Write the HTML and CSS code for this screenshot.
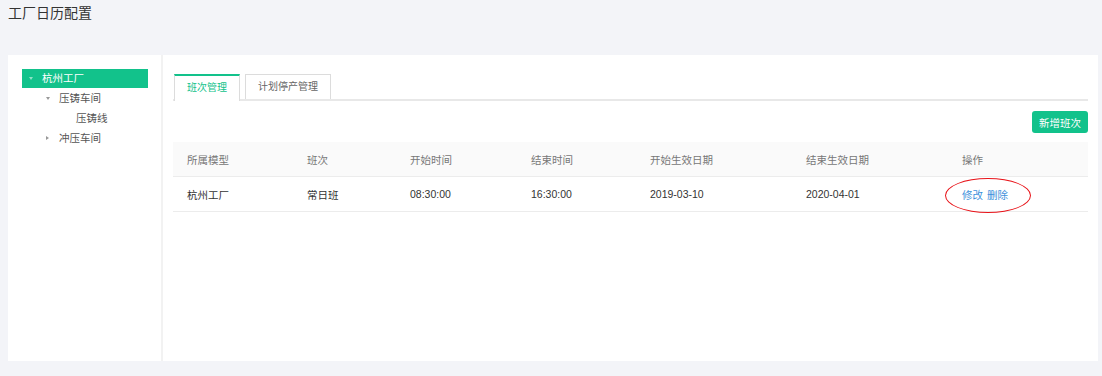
FILE: index.html
```html
<!DOCTYPE html>
<html lang="zh-CN">
<head>
    <meta charset="UTF-8">
    <title>工厂日历配置</title>
    <link rel="stylesheet" href="styles.css">
</head>
<body>

    <div class="page-title">工厂日历配置</div>

    <div class="card">
        <div class="side">
            <ul class="tree">
                <li class="node level-0 active"><span class="arrow down"></span>杭州工厂</li>
                <li class="node level-1"><span class="arrow down"></span>压铸车间</li>
                <li class="node level-2"><span class="arrow none"></span>压铸线</li>
                <li class="node level-1"><span class="arrow right"></span>冲压车间</li>
            </ul>
        </div>

        <div class="main">
            <div class="tabs">
                <div class="tab active">班次管理</div>
                <div class="tab">计划停产管理</div>
            </div>

            <div class="toolbar">
                <button type="button" class="btn-add">新增班次</button>
            </div>

            <table class="grid">
                <colgroup>
                    <col style="width: 120px">
                    <col style="width: 103px">
                    <col style="width: 121px">
                    <col style="width: 119px">
                    <col style="width: 156px">
                    <col style="width: 156px">
                    <col>
                </colgroup>
                <thead>
                    <tr>
                        <th>所属模型</th>
                        <th>班次</th>
                        <th>开始时间</th>
                        <th>结束时间</th>
                        <th>开始生效日期</th>
                        <th>结束生效日期</th>
                        <th>操作</th>
                    </tr>
                </thead>
                <tbody>
                    <tr>
                        <td>杭州工厂</td>
                        <td>常日班</td>
                        <td>08:30:00</td>
                        <td>16:30:00</td>
                        <td>2019-03-10</td>
                        <td>2020-04-01</td>
                        <td class="ops">
                            <a href="#">修改</a>
                            <a href="#">删除</a>
                            <span class="mark"></span>
                        </td>
                    </tr>
                </tbody>
            </table>
        </div>
    </div>

</body>
</html>
```

FILE: styles.css
```css
body {
    margin: 0;
    background-color: #f3f4f8;
    font-family: "Liberation Sans", "Noto Sans CJK SC", sans-serif;
    color: #333;
    font-size: 10.5px;
}

.page-title {
    height: 55px;
    padding: 4px 8px 0;
    box-sizing: border-box;
    font-size: 14px;
    line-height: 18px;
    color: #333;
}

.card {
    display: flex;
    height: 306px;
    margin: 0 4px 0 8px;
    background-color: #fff;
}

/* left tree */
.side {
    flex: none;
    width: 155px;
    box-sizing: border-box;
    padding: 14px 13px 0 14px;
    border-right: 2px solid #f2f2f2;
}

.tree {
    list-style: none;
    margin: 0;
    padding: 0;
}

.node {
    position: relative;
    height: 20px;
    line-height: 19px;
    color: #555;
    white-space: nowrap;
}

.node.level-0 { padding-left: 20px; }
.node.level-1 { padding-left: 37px; }
.node.level-2 { padding-left: 54px; }

.node.active {
    background-color: #12c28b;
    color: #fff;
    height: 19px;
    margin-bottom: 1px;
}

.arrow {
    position: absolute;
    top: 8px;
    width: 0;
    height: 0;
}

.level-0 .arrow { left: 7px; }
.level-1 .arrow { left: 24px; }

.arrow.down {
    border-left: 2.5px solid transparent;
    border-right: 2.5px solid transparent;
    border-top: 3px solid #999;
}

.arrow.right {
    top: 7px;
    border-top: 2.5px solid transparent;
    border-bottom: 2.5px solid transparent;
    border-left: 3px solid #999;
}

.active .arrow.down {
    border-top-color: #8fe3c6;
}

/* right content */
.main {
    flex: 1;
    padding: 19px 10px 0 10px;
}

.tabs {
    display: flex;
    gap: 4px;
    height: 25px;
    border-bottom: 2px solid #e8e8e8;
}

.tab {
    height: 25px;
    line-height: 23px;
    padding: 0 12px;
    margin-left: 1px;
    border: 1px solid #dcdcdc;
    border-bottom: none;
    color: #666;
    font-size: 10px;
    background-color: #fff;
    box-sizing: border-box;
}

.tab.active {
    border-top: 2px solid #12c28b;
    color: #12c28b;
    height: 27px;
    margin-bottom: -2px;
}

.toolbar {
    display: flex;
    justify-content: flex-end;
    margin-top: 10px;
}

.btn-add {
    width: 56px;
    height: 22px;
    padding: 0;
    border: none;
    border-radius: 3px;
    background-color: #12c28b;
    color: #fff;
    font-family: inherit;
    font-size: 10.5px;
}

.grid {
    width: 100%;
    margin-top: 9px;
    border-collapse: collapse;
    table-layout: fixed;
}

.grid th,
.grid td {
    height: 34px;
    padding: 0 0 0 14px;
    text-align: left;
    font-weight: normal;
    border-bottom: 1px solid #ececec;
    white-space: nowrap;
}

.grid th {
    background-color: #fafafa;
    color: #777;
}

.grid td {
    color: #333;
}

.ops {
    position: relative;
}

.ops a {
    color: #3d8fdb;
    text-decoration: none;
    margin-right: 1px;
}

.mark {
    position: absolute;
    left: -3px;
    top: 1px;
    width: 86px;
    height: 35px;
    border: 1.5px solid #e8141a;
    border-radius: 50%;
    box-sizing: border-box;
}
```
